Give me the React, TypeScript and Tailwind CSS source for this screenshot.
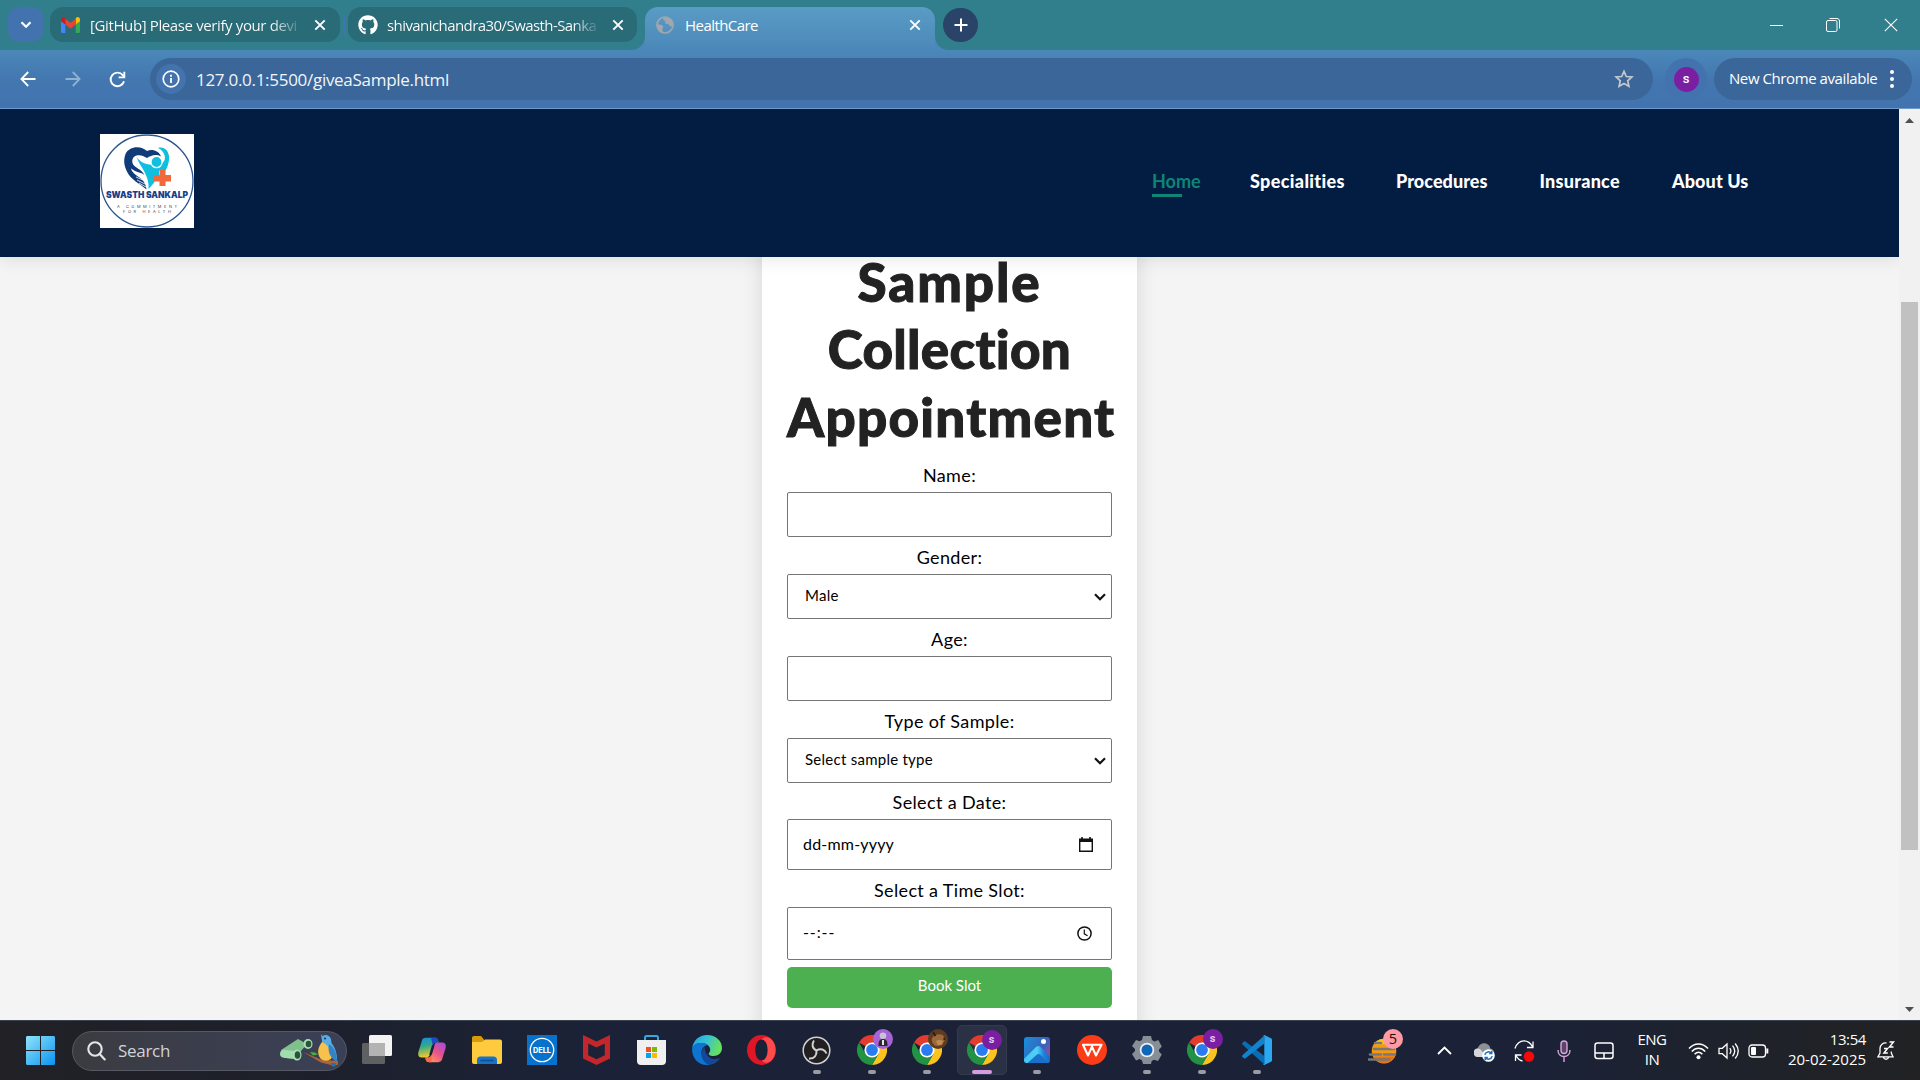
import React from 'react';
import { FaGithub } from 'react-icons/fa';

type Kids = { children?: React.ReactNode };

/* ---------- Browser chrome ---------- */

function CloseX() {
  return (
    <svg width="12" height="12" viewBox="0 0 12 12" className="shrink-0" stroke="#fff" strokeWidth="1.900">
      <path d="M1.300 1.300l9.400 9.400M10.700 1.300L1.300 10.700" />
    </svg>
  );
}

function GmailIcon() {
  return (
    <svg width="19" height="16" viewBox="0 0 19 16" className="shrink-0">
      <path d="M0 4v10.800c0 .7.500 1.200 1.200 1.200h3.100V7z" fill="#4285f4" />
      <path d="M14.700 16h3.100c.7 0 1.200-.5 1.200-1.200V4l-4.300 3z" fill="#34a853" />
      <path d="M14.700 1.800V7.500L19 4.300V2.500C19 .3 16.600-.7 15 .8z" fill="#fbbc04" />
      <path d="M4.300 7.500V1.800l5.200 4 5.200-4v5.700l-5.200 4z" fill="#ea4335" />
      <path d="M0 2.500v1.800l4.300 3.200V1.800L3.800.8C2.300-.6 0 .3 0 2.500z" fill="#c5221f" />
    </svg>
  );
}

function TabStrip() {
  return (
    <div className="flex h-[50px] items-end bg-[#317e8c]">
      <div className="mb-2 ml-2 flex h-[35px] w-[35px] items-center justify-center rounded-[11px] bg-[#4273ae]">
        <svg width="12" height="8" viewBox="0 0 12 8" fill="none" stroke="#fff" strokeWidth="2.200">
          <path d="M1.500 1.300L6 5.800l4.500-4.500" />
        </svg>
      </div>
      <div className="mb-2 ml-[7px] flex h-[35px] w-[290px] items-center rounded-[13px] bg-[#2a6b78] pl-[11px]">
        <GmailIcon />
        <div className="ml-[10px] w-[211px] overflow-hidden bg-[linear-gradient(90deg,#fff_86%,transparent_101%)] bg-clip-text text-[15px] leading-[22px] tracking-[-0.38px] whitespace-nowrap text-transparent">
          [GitHub] Please verify your devi
        </div>
        <div className="ml-[13px]"><CloseX /></div>
      </div>
      <div className="mb-[14px] ml-[3px] h-[20px] w-[3px] rounded bg-[#4273ae]" />
      <div className="mb-2 ml-[2px] flex h-[35px] w-[289px] items-center rounded-[13px] bg-[#2a6b78] pl-[10px]">
        <FaGithub size={20} color="#fff" className="shrink-0" />
        <div className="ml-[9px] w-[211px] overflow-hidden bg-[linear-gradient(90deg,#fff_88%,transparent_101%)] bg-clip-text text-[15px] leading-[22px] tracking-[-0.57px] whitespace-nowrap text-transparent">
          shivanichandra30/Swasth-Sanka
        </div>
        <div className="ml-[14px]"><CloseX /></div>
      </div>
      <div className="relative ml-[8px] flex h-[43px] w-[290px] items-center rounded-t-[13px] bg-linear-to-b from-[#5a9cc5] to-[#4b88b9] pb-[8px] pl-[11px]">
        <svg width="14" height="14" viewBox="0 0 14 14" className="absolute bottom-0 -left-[14px]">
          <path d="M14 0v14H0C8 14 14 8 14 0z" fill="#4b88b9" />
        </svg>
        <svg width="14" height="14" viewBox="0 0 14 14" className="absolute -right-[14px] bottom-0">
          <path d="M0 0v14h14C6 14 0 8 0 0z" fill="#4b88b9" />
        </svg>
        <svg width="18" height="18" viewBox="0 0 18 18" className="shrink-0">
          <circle cx="9" cy="9" r="8" fill="none" stroke="#a3a7ab" strokeWidth="1.700" />
          <path d="M1.200 8.500c2.500-.3 4.600.3 5.600 1.400 1 1.200.1 2.100-.4 3-.4.900.6 1.400.3 3.700C3.500 16 1 12.500 1.200 8.500z" fill="#a3a7ab" />
          <path d="M7 1.300c1 .9-.8 2.200.7 2.900 1.500.5 2 .9 1.400 2.200-.5 1.100 1.100 1.500 2.200 1.400 1.300 0 1.600 1.300 2.500 2.200.8.700 1.900.3 2.800-.2C17.300 5 13.500.3 7 1.300z" fill="#a3a7ab" />
        </svg>
        <div className="ml-[11px] w-[211px] text-[15px] leading-[22px] tracking-[-0.55px] text-white">HealthCare</div>
        <div className="ml-[13px]"><CloseX /></div>
      </div>
      <div className="mb-2 ml-[8px] flex h-[34px] w-[35px] items-center justify-center rounded-full bg-[#294468]">
        <svg width="14" height="14" viewBox="0 0 14 14" stroke="#fff" strokeWidth="2">
          <path d="M7 .5v13M.5 7h13" />
        </svg>
      </div>
      <div className="mb-[18px] ml-auto flex items-center pr-[22px]">
        <div className="h-px w-[13px] bg-white" />
        <svg width="14" height="14" viewBox="0 0 14 14" fill="none" stroke="#fff" className="ml-[43px]">
          <rect x=".5" y="2.500" width="10.500" height="11" rx="1.500" />
          <path d="M3.500.5h7.500c1.400 0 2.500 1.100 2.500 2.500v7.500" />
        </svg>
        <svg width="14" height="14" viewBox="0 0 14 14" stroke="#fff" strokeWidth="1.100" className="ml-[44px]">
          <path d="M.8.8l12.400 12.400M13.200.8L.8 13.200" />
        </svg>
      </div>
    </div>
  );
}

function Toolbar() {
  return (
    <div className="flex h-[59px] items-center border-b border-[#6f9bcb] bg-linear-to-b from-[#4b88b9] via-[#4377b0] to-[#4273ae]">
      <svg width="16" height="16" viewBox="0 0 16 16" fill="none" stroke="#fff" strokeWidth="1.800" className="ml-[20px]">
        <path d="M15.500 8H1.800M8.200 1L1.400 8l6.800 7" />
      </svg>
      <svg width="16" height="16" viewBox="0 0 16 16" fill="none" stroke="#8fb2d4" strokeWidth="1.800" className="ml-[29px]">
        <path d="M.5 8h13.700M7.800 1l6.800 7-6.800 7" />
      </svg>
      <svg width="17" height="17" viewBox="0 0 17 17" fill="none" stroke="#fff" strokeWidth="1.900" className="ml-[28px]">
        <path d="M15 10.300A6.800 6.800 0 1 1 13.800 4.200L15 5.600" />
        <path d="M15.300.8v5.600H9.600" />
      </svg>
      <div className="ml-[24px] flex h-[42px] w-[1503px] items-center rounded-full bg-[#3b6699] pl-[6px]">
        <div className="flex h-[30px] w-[30px] items-center justify-center rounded-full bg-[#4273ae]">
          <svg width="18" height="18" viewBox="0 0 18 18" fill="none" stroke="#fff">
            <circle cx="9" cy="9" r="7.800" strokeWidth="1.700" />
            <path d="M9 8v5" strokeWidth="1.800" />
            <path d="M9 4.800v1.900" strokeWidth="1.800" />
          </svg>
        </div>
        <div className="mt-px ml-[10px] text-[17px] leading-[24px] tracking-[-0.29px] text-[#f1f5fa]">127.0.0.1:5500/giveaSample.html</div>
        <svg width="20" height="20" viewBox="0 0 20 20" fill="none" stroke="#c5c8cf" strokeWidth="1.700" className="mr-[19px] ml-auto">
          <path d="M10 2.300l2.300 5.200 5.600.5-4.200 3.800 1.200 5.600-4.900-2.900-4.900 2.900 1.200-5.600L2.100 8l5.600-.5z" />
        </svg>
      </div>
      <div className="ml-[12px] flex h-[42px] w-[42px] items-center justify-center rounded-full bg-[#4273ae]">
        <div className="flex h-[25px] w-[25px] items-center justify-center rounded-full bg-[#7b1fa2] pb-px font-[Roboto] text-[13px] leading-none font-medium text-white">s</div>
      </div>
      <div className="ml-[7px] flex h-[42px] w-[198px] items-center rounded-full bg-[#3b6699] pl-[15px]">
        <div className="mb-[2px] text-[15px] leading-[22px] tracking-[-0.42px] whitespace-nowrap text-white">New Chrome available</div>
        <svg width="4" height="18" viewBox="0 0 4 18" fill="#fff" className="ml-[13px]">
          <circle cx="2" cy="2" r="2" />
          <circle cx="2" cy="9" r="2" />
          <circle cx="2" cy="16" r="2" />
        </svg>
      </div>
    </div>
  );
}

/* ---------- Page ---------- */

function SwasthLogo() {
  return (
    <svg width="94" height="94" viewBox="0 0 94 94">
      <rect width="94" height="94" fill="#fff" />
      <circle cx="47" cy="47" r="46" fill="none" stroke="#2b5590" strokeWidth="1.300" />
      <path d="M47 17c-6-6-18-5-21.500 3-3 8-.5 15 3.500 21 4.500 6 12 9.500 17.500 14.500-.5-5-3-9.500-7-12-4-2.800-7.500-5-8.500-9l4 2.500c3.500 2 6.500 1.500 9.500 4-3-5-7-6.500-10-9-3.500-3-3-9 2-10.500 4-1 7 .5 10.500 2.500 4-2.800 9-4.500 14-1.500-2-6-9.500-8-14-5.500z" fill="#0f3b78" />
      <path d="M58 14c7-2 12 4 11 12-.5 4-1.700 7.500-3.500 10.500H59V41h-5v6.500h1c-2 2.500-4 5-6.500 7.500.5-6-1-11-3.500-16-2.500-5.500-5.500-8.500-8.500-16 4 5 8 7 13 7.500 5 .3 9 .5 13-1.500 5-4 2-12-4.500-15z" fill="#0fbfe0" />
      <circle cx="56.500" cy="28" r="5.600" fill="#0fbfe0" stroke="#fff" strokeWidth="1.400" />
      <path d="M36 43l9 4M37 46l8 4M39 49l7 4" stroke="#fff" strokeWidth=".8" />
      <path d="M59.500 36h6v5H71v6.500h-5.500V52h-6v-4.500H54V41h5.500z" fill="#f0693a" />
      <text x="6" y="64" fontFamily="Inter" fontWeight="900" fontSize="9" textLength="82" lengthAdjust="spacingAndGlyphs" fill="#17408a">SWASTH SANKALP</text>
      <text x="17" y="74" fontFamily="Inter" fontSize="4" textLength="60" fill="#444">A COMMITMENT</text>
      <text x="23" y="79" fontFamily="Inter" fontSize="4" textLength="48" fill="#444">FOR HEALTH</text>
    </svg>
  );
}

function SiteHeader() {
  return (
    <header className="relative z-10 flex h-[148px] shrink-0 items-center bg-[#031d42] pr-[149px] pl-[100px] shadow-[0_5px_15px_rgba(0,0,0,0.07)]">
      <div className="mb-[4px]"><SwasthLogo /></div>
      <nav className="mb-[4px] ml-auto flex gap-[50px] text-[18px] leading-[24px] font-black whitespace-nowrap text-white">
        <a className="relative w-[48px] font-bold text-[#0d8577]">
          Home
          <span className="absolute top-[25px] left-0 h-[3px] w-[30px] bg-[#0d8577]" />
        </a>
        <a className="w-[96px] tracking-[0.35px]">Specialities</a>
        <a className="w-[93.500px] tracking-[0.05px]">Procedures</a>
        <a className="w-[82.500px] tracking-[0.26px]">Insurance</a>
        <a className="w-[78px] tracking-[0.1px]">About Us</a>
      </nav>
    </header>
  );
}

function Field({ label, children }: Kids & { label: string }) {
  return (
    <div>
      <label className="mb-[3px] block h-[28px] text-center text-[18px] leading-[28px] tracking-[0.35px]">{label}</label>
      {children}
    </div>
  );
}

function SelectBox({ children }: Kids) {
  return (
    <div className="flex h-[45px] items-center justify-between rounded-[2px] border border-[#767676] pr-[5px] pb-[2px] pl-[17px] text-[15px] tracking-[0.26px]">
      {children}
      <svg width="12" height="8" viewBox="0 0 12 8" fill="none" stroke="#111" strokeWidth="2.200" className="mt-[3px]">
        <path d="M1 1.200l5 5 5-5" />
      </svg>
    </div>
  );
}

function AppointmentForm() {
  return (
    <main className="mx-auto -mt-[40px] w-[375px] bg-white px-[25px] pt-[30.500px] pb-[60px] shadow-[0_0_20px_rgba(0,0,0,0.12)]">
      <h1 className="text-center text-[53px] leading-[67.500px] font-black text-[#222] [-webkit-text-stroke:1px_#222]">
        <span className="block tracking-[1.860px]">Sample</span>
        <span className="block tracking-[0.3px]">Collection</span>
        <span className="block tracking-[1.250px]">Appointment</span>
      </h1>
      <form className="mt-[11.300px] flex flex-col gap-[5.750px]">
        <Field label="Name:">
          <input className="block h-[45px] w-full rounded-[2px] border border-[#767676]" />
        </Field>
        <Field label="Gender:"><SelectBox>Male</SelectBox></Field>
        <Field label="Age:">
          <input className="block h-[45px] w-full rounded-[2px] border border-[#767676]" />
        </Field>
        <Field label="Type of Sample:"><SelectBox>Select sample type</SelectBox></Field>
        <Field label="Select a Date:">
          <div className="flex h-[50.500px] items-center justify-between rounded-[2px] border border-[#767676] pr-[18px] pb-[2px] pl-[15px] text-[16px] tracking-[0.19px]">
            dd-mm-yyyy
            <svg width="14" height="15" viewBox="0 0 14 15" className="mt-[2px]">
              <path d="M2.200 0h1.600v1.500h6.400V0h1.600v1.500H14V15H0V1.500h2.200zM1.400 5v8.600h11.200V5z" fillRule="evenodd" fill="#111" />
            </svg>
          </div>
        </Field>
        <Field label="Select a Time Slot:">
          <div className="flex h-[53.500px] items-center justify-between rounded-[2px] border border-[#767676] pr-[19px] pl-[15px] text-[16px] tracking-[0.9px]">
            <span className="mb-[3px]">--:--</span>
            <svg width="15" height="15" viewBox="0 0 15 15" fill="none" stroke="#111" strokeWidth="1.500">
              <circle cx="7.500" cy="7.500" r="6.600" />
              <path d="M7.300 3.500v4.300l3.300 2" strokeWidth="1.200" />
            </svg>
          </div>
        </Field>
        <button type="button" className="mt-[0.8px] h-[41px] w-full rounded-[5px] bg-[#4caf50] pb-[3px] text-[15px] text-white">Book Slot</button>
      </form>
    </main>
  );
}

function Scrollbar() {
  return (
    <div className="flex w-[21px] flex-col items-center bg-[#f1f1f1]">
      <svg width="9" height="5" viewBox="0 0 9 5" className="mt-[9px]"><path d="M0 5L4.500 0 9 5z" fill="#505050" /></svg>
      <div className="mt-[179px] h-[548px] w-[17px] bg-[#c1c1c1]" />
      <svg width="9" height="5" viewBox="0 0 9 5" className="mt-auto mb-[8px]"><path d="M0 0l4.500 5L9 0z" fill="#505050" /></svg>
    </div>
  );
}

/* ---------- Taskbar ---------- */

function ChromeLogo() {
  return (
    <svg width="30" height="30" viewBox="0 0 30 30">
      <path d="M15 15L2 7.500A15 15 0 0 1 28 7.500z" fill="#e33b2e" />
      <path d="M15 7.500h13A15 15 0 0 1 15 30l6.500-11.300z" fill="#fcc31e" />
      <path d="M2 7.500A15 15 0 0 0 15 30l6.500-11.200L15 15 8.500 18.800z" fill="#229342" />
      <circle cx="15" cy="15" r="7.600" fill="#fff" />
      <circle cx="15" cy="15" r="5.900" fill="#2a7bf0" />
    </svg>
  );
}

function ProfileBadge() {
  return (
    <div className="absolute top-[4px] right-[4px] flex h-[20px] w-[20px] items-center justify-center rounded-full bg-[#7b1fa2] pb-px font-[Roboto] text-[11px] leading-none font-bold text-[#e3c6ee]">s</div>
  );
}

function Cell({ children, dot, active }: Kids & { dot?: boolean; active?: boolean }) {
  return (
    <div className="flex h-full w-[55px] justify-center pt-[4px]">
      <div className={active ? 'relative flex h-[50px] w-[50px] items-center justify-center rounded-[5px] border border-[#343b50] bg-[#2b3145]' : 'relative flex h-[50px] w-[50px] items-center justify-center'}>
        {children}
        {dot && <div className="absolute bottom-px h-[4px] w-[8px] rounded-full bg-[#9a9ca4]" />}
        {active && <div className="absolute bottom-0 h-[4px] w-[20px] rounded-full bg-[#d99be0]" />}
      </div>
    </div>
  );
}

function SearchArt() {
  return (
    <svg width="62" height="34" viewBox="0 0 62 34" className="mr-[5px] ml-auto">
      <path d="M2 16l17-11 9 5-6 7-4 8-12-1z" fill="#7fc08c" />
      <path d="M1 20c0-4 3-5 6-4l9 1v8l-9-1c-3 0-6-1-6-4z" fill="#a3dcae" />
      <ellipse cx="18" cy="21" rx="4.500" ry="5.500" fill="#a9e0b3" />
      <ellipse cx="18.500" cy="21" rx="2.800" ry="3.800" fill="#29543a" />
      <ellipse cx="29" cy="10" rx="4.500" ry="5" fill="#a9e0b3" />
      <ellipse cx="29.500" cy="10" rx="2.800" ry="3.300" fill="#29543a" />
      <path d="M24 18l18 7.500 17 1.500v4h-7l-10-2.500z" fill="#a9653a" />
      <path d="M52 29h5l-1 4-4-1z" fill="#2d6cab" />
      <path d="M31 18l5 .5 3 2-5 1z" fill="#4cae3c" />
      <path d="M42 0l1.500 2c3-2 7-1 8.500 3l.5 4c4 5 6 12 5.500 19l-3.500-4-9 1z" fill="#58aee3" />
      <path d="M43 8c-4 5-5.500 11-1.500 16.500 3 3 8 3 10.500 0C54 17 49 11 43 8z" fill="#f6c24c" />
      <path d="M50 10c5 3 8 9 8 18-6-3-10-10-8-18z" fill="#3583c4" />
      <circle cx="46" cy="4.500" r="1" fill="#12324f" />
    </svg>
  );
}

function StartArea() {
  return (
    <>
      <svg width="29" height="29" viewBox="0 0 29 29" className="ml-[26px] shrink-0">
        <defs>
          <linearGradient id="win" x1="0" y1="0" x2="1" y2="1">
            <stop offset="0" stopColor="#8fe4fb" />
            <stop offset="1" stopColor="#0a93f0" />
          </linearGradient>
        </defs>
        <path d="M1.500 0H14v14H0V1.500C0 .6.6 0 1.500 0zM15 0h12.500c.9 0 1.500.6 1.500 1.500V14H15zM0 15h14v14H1.500C.6 29 0 28.400 0 27.500zM15 15h14v12.500c0 .9-.6 1.500-1.500 1.500H15z" fill="url(#win)" />
      </svg>
      <div className="ml-[17px] flex h-[40px] w-[275px] shrink-0 items-center rounded-full border border-[#565963] bg-linear-to-r from-[#3b3b41] to-[#3a4057] pl-[14px]">
        <svg width="19" height="20" viewBox="0 0 19 20" fill="none" stroke="#e6e6e8" strokeWidth="2.100">
          <circle cx="8" cy="8" r="6.700" />
          <path d="M12.700 13l5 5.500" strokeLinecap="round" />
        </svg>
        <div className="ml-[12px] text-[17px] tracking-[-0.3px] text-[#d3d3d6]">Search</div>
        <SearchArt />
      </div>
    </>
  );
}

function Apps() {
  return (
    <div className="ml-[2px] flex h-full">
      <Cell>
        <svg width="30" height="30" viewBox="0 0 30 30">
          <rect x="0" y="8" width="23" height="21" rx="1.500" fill="#5f6062" />
          <rect x="7" y="0" width="23" height="21" rx="1.500" fill="#f3f3f3" />
          <rect x="7" y="8" width="16" height="13" fill="#b3b3b4" />
        </svg>
      </Cell>
      <Cell>
        <svg width="28" height="28" viewBox="0 0 30 28">
          <defs>
            <linearGradient id="cpA" x1="0" y1="0" x2=".2" y2="1"><stop offset="0" stopColor="#1b8ae0" /><stop offset=".45" stopColor="#2fa98c" /><stop offset="1" stopColor="#f0c82c" /></linearGradient>
            <linearGradient id="cpB" x1="1" y1="0" x2=".2" y2="1"><stop offset="0" stopColor="#9a4fe8" /><stop offset=".5" stopColor="#e8508c" /><stop offset="1" stopColor="#ff9a56" /></linearGradient>
          </defs>
          <path d="M8 1h10c3 0 3.500 2 4.200 5h-3c-2 0-3 1-3.500 3l-3 10c-.8 2-2 3-4 3H4c-3 0-4.500-2-3.500-6L4 4.500C4.700 2 6 1 8 1z" fill="url(#cpA)" />
          <path d="M14 1h4c3 0 3.500 2 4.200 5h-3c-2 0-3 1-3.500 3z" fill="#2148c8" />
          <path d="M22 27H12c-3 0-3.500-2-4.200-5h3c2 0 3-1 3.500-3l3-10c.8-2 2-3 4-3H26c3 0 4.500 2 3.500 6L26 23.500C25.300 26 24 27 22 27z" fill="url(#cpB)" />
          <path d="M7.800 22h3c2 0 3-1 3.500-3l.5 8H12c-3 0-3.500-2-4.200-5z" fill="#f9694f" />
          <path d="M15 9h2.800l-3 10H12z" fill="#1b2237" />
        </svg>
      </Cell>
      <Cell>
        <svg width="30" height="28" viewBox="0 0 30 28">
          <path d="M0 2c0-1.200.8-2 2-2h7l3 3.500V9H0z" fill="#d99a08" />
          <path d="M0 6h10l3-2.500h15c1.200 0 2 .8 2 2V26c0 1.200-.8 2-2 2H2c-1.200 0-2-.8-2-2z" fill="#fdcb3d" />
          <path d="M5 28v-4c0-2.200 1.300-3.500 3.500-3.500h13c2.200 0 3.500 1.300 3.500 3.500v4z" fill="#1673c8" />
          <path d="M8.500 24.500h13" stroke="#0b4f94" strokeWidth="1.500" />
        </svg>
      </Cell>
      <Cell>
        <svg width="30" height="30" viewBox="0 0 30 30">
          <rect width="30" height="30" fill="#0672cb" />
          <circle cx="15" cy="15" r="11.700" fill="none" stroke="#fff" strokeWidth="1.300" />
          <text x="15" y="17.800" textAnchor="middle" fontFamily="Inter" fontWeight="800" fontSize="7.500" textLength="18" lengthAdjust="spacingAndGlyphs" fill="#fff">DELL</text>
        </svg>
      </Cell>
      <Cell>
        <svg width="27" height="30" viewBox="0 0 27 30">
          <path d="M0 0l13.500 6.500L27 0v23.500L13.500 30 0 23.500zM5.200 8.500v11.700l8.300 4 8.300-4V8.500l-8.300 4z" fillRule="evenodd" fill="#c3272b" />
        </svg>
      </Cell>
      <Cell>
        <svg width="29" height="30" viewBox="0 0 29 30">
          <path d="M8 7V2.500C8 1.600 8.600 1 9.500 1h10c.9 0 1.500.6 1.500 1.500V7" fill="none" stroke="#35a7e2" strokeWidth="2" />
          <path d="M0 5h29v21c0 2.500-1.500 4-4 4H4c-2.500 0-4-1.500-4-4z" fill="#f0f0f0" />
          <path d="M9 12h5v5H9z" fill="#f25022" />
          <path d="M15 12h5v5h-5z" fill="#7fba00" />
          <path d="M9 18h5v5H9z" fill="#00a4ef" />
          <path d="M15 18h5v5h-5z" fill="#ffb900" />
        </svg>
      </Cell>
      <Cell>
        <svg width="30" height="30" viewBox="0 0 30 30">
          <defs>
            <linearGradient id="edT" x1="0" y1="0" x2="1" y2=".3"><stop offset="0" stopColor="#1fa0e0" /><stop offset=".5" stopColor="#35c1d8" /><stop offset="1" stopColor="#66e05e" /></linearGradient>
          </defs>
          <path d="M0 14C1 5.500 7 0 15 0c9 0 15 6 15 13 0 5-4 8-8.500 8-4 0-5.500-1.500-4.500-3s1.500-2.500 1-4.500C17 9.500 13 8 9 8c-4 0-7.500 2-9 6z" fill="url(#edT)" />
          <path d="M0 14c1.500-4 5-6 9-6 2.500 0 5 .6 6.700 2C11 11 9 15 9.500 19c.6 6 5 10.500 9.500 10.500C8 32 0 24.500 0 14z" fill="#0d74d1" />
          <path d="M12.500 12C8.500 16 9 23 13 27c2 2 4 2.800 6.500 2.500 4-1 7-3.500 8.500-6.500-7 3-14.500 0-15.500-11z" fill="#114a9a" />
        </svg>
      </Cell>
      <Cell>
        <svg width="29" height="30" viewBox="0 0 29 30">
          <path d="M14.500 0a14.500 15 0 1 0 0 30 14.500 15 0 1 0 0-30zm0 4.500c3.800 0 6.200 4.500 6.200 10.500s-2.400 10.500-6.200 10.500S8.300 21 8.300 15s2.400-10.500 6.200-10.500z" fillRule="evenodd" fill="#e01626" />
          <path d="M14.500 4.500C17 1.500 21 1.500 24 4c6 5.500 6 16.500 0 22-3 2.500-7 2.500-9.500-.5 3.800 0 6.200-4.500 6.200-10.500s-2.400-10.500-6.200-10.500z" fill="#ff4b4b" />
        </svg>
      </Cell>
      <Cell dot>
        <svg width="29" height="29" viewBox="0 0 29 29" fill="none" stroke="#d0d0d2">
          <circle cx="14.500" cy="14.500" r="13.300" fill="#221f20" strokeWidth="1.500" />
          <path d="M14.500 14.500C10 12.500 9.500 8 12 4.500M14.500 14.500c4-2.500 8.500-1 10 3M14.500 14.500c.5 5-2.500 8.500-7.500 8" strokeWidth="2" />
        </svg>
      </Cell>
      <Cell dot>
        <ChromeLogo />
        <svg width="20" height="20" viewBox="0 0 20 20" className="absolute top-[4px] right-[4px]">
          <circle cx="10" cy="10" r="10" fill="#a463d6" />
          <path d="M5.500 17c0-5 1-7 4.500-7s4.500 2 4.500 7z" fill="#2a2a30" />
          <circle cx="10" cy="6.800" r="3.300" fill="#c9c5cd" />
          <path d="M9 11h2v5H9z" fill="#e8e8ea" />
        </svg>
      </Cell>
      <Cell dot>
        <ChromeLogo />
        <svg width="20" height="20" viewBox="0 0 20 20" className="absolute top-[4px] right-[4px]">
          <circle cx="10" cy="10" r="10" fill="#5d3a20" />
          <path d="M4 9c2-3 7-5 11-3l2 5-3 5-6 1c-3-1-5-5-4-8z" fill="#9a683a" />
          <path d="M8 12c2-1.500 5-1.500 7 0l-1 3.500-4 1z" fill="#c08a52" />
          <path d="M5 3l2.500 4M15.500 9.500l1.500 1" stroke="#2d1c10" strokeWidth="1.600" />
        </svg>
      </Cell>
      <Cell active>
        <ChromeLogo />
        <ProfileBadge />
      </Cell>
      <Cell dot>
        <svg width="26" height="26" viewBox="0 0 26 26">
          <defs>
            <linearGradient id="ph" x1="0" y1="0" x2="1" y2=".6"><stop offset="0" stopColor="#1591dd" /><stop offset=".7" stopColor="#3b62b8" /><stop offset="1" stopColor="#8450a8" /></linearGradient>
            <linearGradient id="phM" x1="0" y1="0" x2="1" y2="0"><stop offset="0" stopColor="#3ec8f3" /><stop offset=".5" stopColor="#4fd0f8" /><stop offset=".75" stopColor="#1c85dc" /><stop offset="1" stopColor="#1668c0" /></linearGradient>
          </defs>
          <rect width="26" height="26" rx="3" fill="url(#ph)" />
          <path d="M0 22l12-12c1.500-1.500 3-1.500 4.500 0L26 19.500V23c0 2-1 3-3 3H3c-2 0-3-1-3-3z" fill="url(#phM)" />
          <path d="M3.500 26l9.500-8.500c1-.8 2-.8 3 0l8 8.200-1 .3z" fill="#1a6fca" />
          <circle cx="19.500" cy="4.500" r="2.500" fill="#fff" />
        </svg>
      </Cell>
      <Cell>
        <svg width="30" height="30" viewBox="0 0 30 30">
          <circle cx="15" cy="15" r="15" fill="#fb3c17" />
          <path d="M6 9.800h9.700L11 20.500zM15.700 9.800h8.800L19 20.500l-3.800-8.300" fill="none" stroke="#fff" strokeWidth="2.100" strokeLinejoin="round" />
        </svg>
      </Cell>
      <Cell dot>
        <svg width="30" height="30" viewBox="0 0 30 30">
          <path d="M11 1h8l1 4 2.500 1.500L26.300 5l3.500 6.500L27 14.500v2l2.800 3L26 26l-4-1.200-2.300 1.300L19 29h-8l-1-3.500L7.700 24 4 25.500 0 19l3-3v-2l-3-3L4 5l3.700 1.300L10 5z" fill="#868e96" />
          <circle cx="15" cy="15" r="7.300" fill="#e9edf0" />
          <circle cx="15" cy="15" r="5.500" fill="#1067b5" />
        </svg>
      </Cell>
      <Cell dot>
        <ChromeLogo />
        <ProfileBadge />
      </Cell>
      <Cell dot>
        <svg width="30" height="30" viewBox="0 0 30 30">
          <path d="M.4 9.600C-.1 9.100-.1 8.400.4 8L2 6.600c.5-.4 1-.4 1.500 0L22.300 21v8.500z" fill="#0a6cb4" />
          <path d="M.4 20.300C-.1 20.800-.1 21.500.4 22L2 23.300c.5.400 1 .4 1.500 0L22.300 8.500V.5z" fill="#1182cc" />
          <path d="M22.300 0L29 3.200c.6.300 1 .8 1 1.500v20.600c0 .7-.4 1.200-1 1.500L22.300 30c-.8.300-1.500.2-2-.4 1 .5 2 0 2-1V1.400c0-1-1-1.500-2-1 .5-.6 1.200-.7 2-.4z" fill="#2aa8f2" />
        </svg>
      </Cell>
    </div>
  );
}

function Tray() {
  return (
    <div className="ml-auto flex h-full items-center pr-[25px] text-[15px] text-white">
      <svg width="36" height="36" viewBox="0 0 36 36" className="mb-[7px]">
        <circle cx="16" cy="22" r="12.300" fill="#f59a10" />
        <path d="M8 12.500a12.300 12.300 0 0 1 17 1.500l-17 2z" fill="#fcc419" />
        <path d="M5 27.500h22a12.300 12.300 0 0 1-20 3z" fill="#e9700c" />
        <path d="M7 14h6M6 20h20M2 25.500h11M16 25.500h11M1 30.500h20" stroke="#78777b" strokeWidth="2.600" strokeLinecap="round" />
        <circle cx="25" cy="10" r="10" fill="#ff99a4" />
        <text x="25" y="15.200" textAnchor="middle" fontFamily="Open Sans" fontSize="14.500" fill="#111">5</text>
      </svg>
      <svg width="15" height="9" viewBox="0 0 15 9" fill="none" stroke="#fff" strokeWidth="1.800" className="ml-[33px]">
        <path d="M1 8l6.500-6.500L14 8" />
      </svg>
      <svg width="21" height="20" viewBox="0 0 21 20" className="mt-[3px] ml-[22px]">
        <path d="M4 15a4.300 4.300 0 0 1-.5-8.500C5 2 9 .5 12 1.500c3 .9 4 3 4.300 5 2.500.5 3.700 2 3.700 4.300 0 2.500-2 4.200-4.500 4.200z" fill="#8d9094" />
        <path d="M4 15a4.300 4.300 0 1 1 2-8l7 8z" fill="#d5d7da" />
        <circle cx="14.500" cy="13.500" r="6.300" fill="#fff" />
        <path d="M10.800 12.800a3.800 3.800 0 0 1 6.700-1.500M18.200 14.200a3.800 3.800 0 0 1-6.700 1.500M17.800 8.800v2.700h-2.700M11.200 18.200v-2.700h2.700" fill="none" stroke="#1a70c4" strokeWidth="1.500" />
      </svg>
      <svg width="21" height="22" viewBox="0 0 21 22" fill="none" stroke="#fff" strokeWidth="1.300" className="ml-[19px]">
        <path d="M1 8.500C2 4 6 .8 10 .8c3.500 0 6.500 2 8.500 6M19 1.500V7.500h-6M8.500 21c-3-.5-5-2.500-6.500-5.500M1.500 21v-6h6" />
        <circle cx="15" cy="16.500" r="5.200" fill="#f50a0a" stroke="none" />
      </svg>
      <svg width="14" height="22" viewBox="0 0 14 22" fill="none" stroke="#d9a5dd" strokeWidth="1.400" className="ml-[22px]">
        <rect x="4" y="1" width="6" height="12.500" rx="3" fill="#5b4668" />
        <path d="M1 10c0 4 2.500 6.500 6 6.500s6-2.500 6-6.500M7 16.500V22" />
      </svg>
      <svg width="20" height="18" viewBox="0 0 20 18" fill="none" stroke="#fff" strokeWidth="1.500" className="ml-[23px]">
        <rect x="1" y="1" width="18" height="15.500" rx="2.500" />
        <path d="M1 11h18M10 11v5.500" />
      </svg>
      <div className="mb-[3px] ml-[23px] w-[30px] text-center text-[15px] leading-[20px] tracking-[-0.5px]">
        ENG
        <br />
        IN
      </div>
      <svg width="21" height="18" viewBox="0 0 21 18" fill="none" stroke="#fff" strokeWidth="1.500" className="ml-[21px]">
        <path d="M1 6.500c5.500-6 13.500-6 19 0M3.800 9.500c4-4.300 9.400-4.300 13.400 0M6.600 12.300c2.500-2.600 5.300-2.600 7.800 0" />
        <circle cx="10.500" cy="15.300" r="2" fill="#fff" stroke="none" />
      </svg>
      <svg width="21" height="20" viewBox="0 0 21 20" fill="none" stroke="#fff" strokeWidth="1.300" className="ml-[9px]">
        <path d="M1 7.300h3.300L9 3v14l-4.700-4.300H1z" />
        <path d="M11.800 7.200c1.400 1.800 1.400 3.800 0 5.600M14.500 4.700c2.800 3.300 2.800 7.300 0 10.600M17.200 2.500c3.800 4.700 3.800 10.300 0 15" />
      </svg>
      <svg width="21" height="14" viewBox="0 0 21 14" fill="none" stroke="#fff" strokeWidth="1.300" className="ml-[9px]">
        <rect x="1" y="1" width="16.500" height="12" rx="3" />
        <rect x="3" y="3" width="5" height="8" rx="1" fill="#fff" stroke="none" />
        <path d="M19.300 4.500v5" strokeWidth="2" />
      </svg>
      <div className="mb-[4px] ml-[15px] w-[82px] text-right text-[15px] leading-[20px]">
        <div className="tracking-[-0.4px]">13:54</div>
        <div className="tracking-[-0.03px]">20-02-2025</div>
      </div>
      <svg width="18" height="20" viewBox="0 0 18 20" fill="none" stroke="#fff" strokeWidth="1.300" className="ml-[11px]">
        <path d="M9.500 2C6 1.600 3 4 3 7.500v4.500L1 15.800h15L14.300 12v-1.500M6.500 16c.5 3 4.500 3 5 0" />
        <path d="M7 7.500h3.500L7 12h3.800M12.500 1h4l-4 5h4" strokeWidth="1.500" />
      </svg>
    </div>
  );
}

export default function App() {
  return (
    <div className="flex h-[1080px] w-[1920px] flex-col overflow-hidden font-['Open_Sans',sans-serif]">
      <TabStrip />
      <Toolbar />
      <div className="flex h-[911px] overflow-hidden bg-[#f4f4f4]">
        <div className="flex w-[1899px] flex-col overflow-hidden font-[Lato,sans-serif] text-black">
          <SiteHeader />
          <div className="h-[763px] shrink-0"><div className="flow-root"><AppointmentForm /></div></div>
        </div>
        <Scrollbar />
      </div>
      <div className="flex h-[60px] items-center border-t border-[#3a4350] bg-[linear-gradient(90deg,#212126_0%,#1e202a_14%,#1b2237_30%,#1b2238_80%,#1f2229_92%,#222224_100%)]">
        <StartArea />
        <Apps />
        <Tray />
      </div>
    </div>
  );
}
